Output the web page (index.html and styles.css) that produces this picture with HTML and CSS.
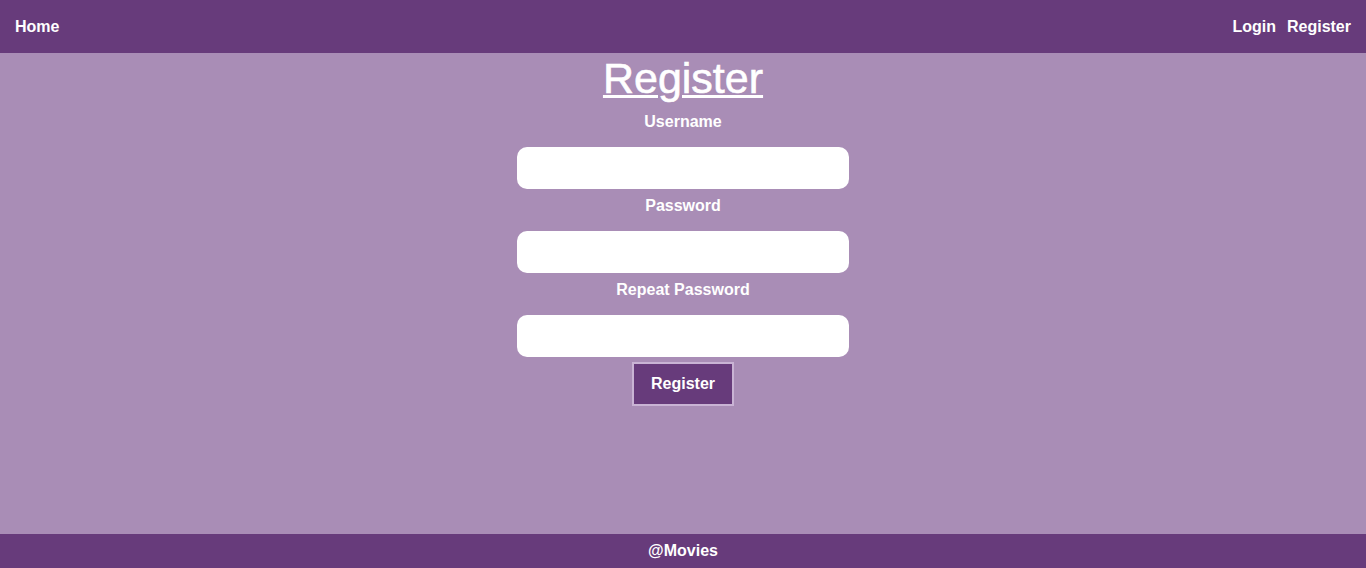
FILE: index.html
```html
<!DOCTYPE html>
<html lang="en">
<head>
<meta charset="utf-8">
<title>Register</title>
<link rel="stylesheet" href="styles.css">
</head>
<body>
<header class="topbar">
  <nav class="nav-left"><a class="nav-link" href="#">Home</a></nav>
  <nav class="nav-right">
    <a class="nav-link" href="#">Login</a>
    <a class="nav-link" href="#">Register</a>
  </nav>
</header>
<main class="content">
  <form class="register-form">
    <h1 class="title">Register</h1>
    <label class="field-label" for="username">Username</label>
    <input class="field-input" id="username" type="text">
    <label class="field-label" for="password">Password</label>
    <input class="field-input" id="password" type="password">
    <label class="field-label" for="repeat">Repeat Password</label>
    <input class="field-input" id="repeat" type="password">
    <button class="submit-btn" type="submit">Register</button>
  </form>
</main>
<footer class="footer">@Movies</footer>
</body>
</html>
```
FILE: styles.css
```css
html, body {
  margin: 0;
  padding: 0;
  height: 100%;
}
body {
  display: flex;
  flex-direction: column;
  min-height: 100vh;
  background: #a98db6;
  color: #ffffff;
  font-family: "Liberation Sans", Arial, sans-serif;
}
.topbar {
  height: 53px;
  background: #673b7b;
  display: flex;
  align-items: center;
  justify-content: space-between;
  padding: 0 15px;
  flex-shrink: 0;
}
.nav-right {
  display: flex;
  gap: 11px;
}
.nav-link {
  color: #ffffff;
  text-decoration: none;
  font-weight: bold;
  font-size: 16px;
  line-height: 18px;
}
.content {
  flex: 1;
}
.register-form {
  display: flex;
  flex-direction: column;
  align-items: center;
}
.title {
  margin: 0;
  font-size: 43px;
  line-height: 50px;
  font-weight: normal;
  text-decoration: underline;
  text-decoration-thickness: 3px;
  text-underline-offset: 2px;
  -webkit-text-stroke: 0.6px #ffffff;
}
.field-label {
  display: block;
  margin-top: 10px;
  font-size: 16px;
  line-height: 18px;
  font-weight: bold;
}
.field-input + .field-label {
  margin-top: 8px;
}
.field-input {
  box-sizing: border-box;
  width: 332px;
  height: 42px;
  margin-top: 16px;
  border: none;
  border-radius: 10px;
  background: #ffffff;
  outline: none;
}
.submit-btn {
  margin-top: 5px;
  box-sizing: border-box;
  width: 102px;
  height: 44px;
  padding: 0;
  border: 2px solid #c9b3d4;
  background: #673b7b;
  color: #ffffff;
  font-family: inherit;
  font-size: 16px;
  font-weight: bold;
  line-height: 18px;
}
.footer {
  height: 34px;
  background: #673b7b;
  display: flex;
  align-items: center;
  justify-content: center;
  font-weight: bold;
  font-size: 16px;
  flex-shrink: 0;
}
```
